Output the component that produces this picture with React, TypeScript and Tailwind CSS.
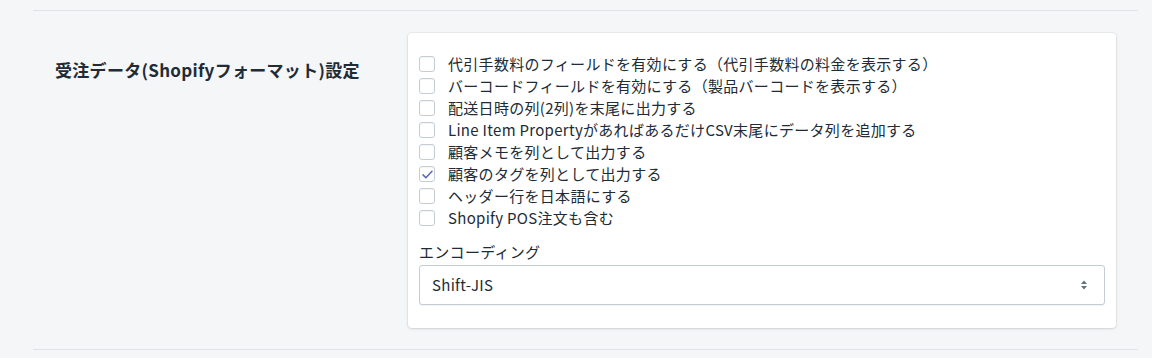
const options = [
  { label: "代引手数料のフィールドを有効にする（代引手数料の料金を表示する）", checked: false },
  { label: "バーコードフィールドを有効にする（製品バーコードを表示する）", checked: false },
  { label: "配送日時の列(2列)を末尾に出力する", checked: false },
  { label: "Line Item PropertyがあればあるだけCSV末尾にデータ列を追加する", checked: false },
  { label: "顧客メモを列として出力する", checked: false },
  { label: "顧客のタグを列として出力する", checked: true },
  { label: "ヘッダー行を日本語にする", checked: false },
  { label: "Shopify POS注文も含む", checked: false },
];

function Checkbox({ checked }: { checked: boolean }) {
  return (
    <span className="grid h-4 w-4 shrink-0 place-items-center rounded-[3px] border border-[#c4cdd5] bg-white shadow-[inset_0_1px_1px_rgba(0,0,0,0.04)]">
      {checked && (
        <svg viewBox="0 0 16 16" className="h-[13px] w-[13px]" fill="none">
          <path d="M2.5 8.5l3.5 3.5 7.5-8" stroke="#5c6ac4" strokeWidth="2" strokeLinecap="round" strokeLinejoin="round" />
        </svg>
      )}
    </span>
  );
}

export default function App() {
  return (
    <div
      className="h-[358px] w-full bg-[#f4f6f8] text-[#212b36]"
      style={{ fontFamily: '"Noto Sans CJK JP", "Open Sans", sans-serif' }}
    >
      <div className="ml-[33px] mr-[14px] h-[11px] border-b border-[#dfe3e8]" />
      <div className="ml-[33px] mr-[14px] flex border-b border-[#dfe3e8] pb-[21px] pt-[22px]">
        <div className="w-[375px] shrink-0 pl-[22px] pt-[26px]">
          <h2 className="text-[17px] font-semibold leading-[22px] tracking-[0.3px]">受注データ(Shopifyフォーマット)設定</h2>
        </div>
        <div className="w-[708px] rounded-[4px] bg-white px-[11px] pb-[23px] pt-[20px] shadow-[0_0_0_1px_rgba(63,63,68,0.05),0_1px_3px_0_rgba(63,63,68,0.15)]">
          <ul className="flex flex-col">
            {options.map((o) => (
              <li key={o.label} className="flex h-[22px] items-center gap-[13px] text-[15px] leading-[22px] tracking-[0.3px]">
                <Checkbox checked={o.checked} />
                <span className="whitespace-nowrap">{o.label}</span>
              </li>
            ))}
          </ul>
          <div className="mt-[12px]">
            <div className="text-[15px] leading-[22px] tracking-[0.3px]">エンコーディング</div>
            <div className="mt-[2px] flex h-[40px] items-center justify-between rounded-[3px] border border-[#c4cdd5] bg-white pl-[12px] pr-[15px] shadow-[0_1px_0_rgba(22,29,37,0.05)]">
              <span className="text-[15px] tracking-[0.3px]">Shift-JIS</span>
              <svg viewBox="0 0 10 14" className="h-[14px] w-[10px]" fill="#637381">
                <path d="M5 2.5l3 3.5H2z" />
                <path d="M5 11.5L2 8h6z" />
              </svg>
            </div>
          </div>
        </div>
      </div>
    </div>
  );
}
